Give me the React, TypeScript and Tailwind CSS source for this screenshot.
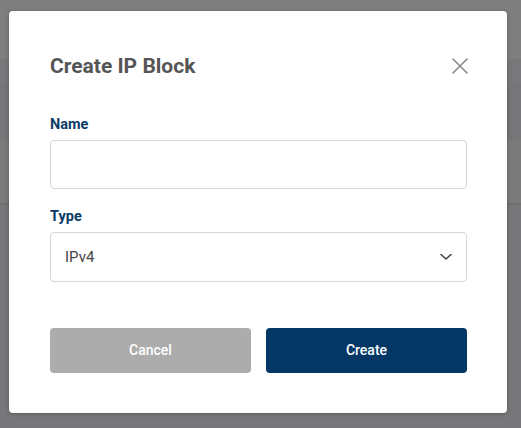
import * as React from "react";

function CloseIcon() {
  return (
    <svg width="16" height="16" viewBox="0 0 16 16" fill="none" aria-hidden>
      <path d="M1 1L15 15M15 1L1 15" stroke="#8a8a8a" strokeWidth="1.6" strokeLinecap="round" />
    </svg>
  );
}

function Chevron() {
  return (
    <svg width="12" height="7" viewBox="0 0 12 7" fill="none" aria-hidden>
      <path d="M1 1L6 5.5L11 1" stroke="#444444" strokeWidth="1.6" strokeLinecap="round" strokeLinejoin="round" />
    </svg>
  );
}

function Field({ label, children, className }: { label: string; children: React.ReactNode; className?: string }) {
  return (
    <div className={className}>
      <div className="text-[14.5px] leading-[20px] font-bold text-[#0b3b67]">{label}</div>
      {children}
    </div>
  );
}

export default function App() {
  const [name, setName] = React.useState("");
  const [type, setType] = React.useState("IPv4");

  return (
    <div className="relative h-[428px] w-[521px] overflow-hidden font-['Roboto',_'Liberation_Sans',_sans-serif]">
      {/* page behind the overlay */}
      <div className="flex h-full flex-col">
        <div className="h-[59px] bg-[#7e7e7e]" />
        <div className="h-[27px] border-b border-[#737375] bg-[#78787a]" />
        <div className="h-[53px] border-b border-[#747476] bg-[#767678]" />
        <div className="h-[66px] border-b-2 border-[#6f6f73] bg-[#7a7a7a]" />
        <div className="flex-1 bg-[#77777a]" />
      </div>

      {/* dialog */}
      <div className="absolute left-[9px] top-[11px] w-[498px] rounded-[4px] bg-white pb-[40px] pl-[41px] pr-[40px] pt-[43px] shadow-[0_1px_4px_rgba(0,0,0,0.25)]">
        <div className="flex items-center justify-between">
          <h2 className="text-[21px] leading-[24px] font-bold text-[#555555]">Create IP Block</h2>
          <button className="mr-[-1px] grid h-[16px] w-[16px] place-items-center" aria-label="Close">
            <CloseIcon />
          </button>
        </div>

        <Field label="Name" className="mt-[37px]">
          <input
            value={name}
            onChange={(e) => setName(e.target.value)}
            className="mt-[5px] block h-[49px] w-full rounded-[4px] border border-[#d3d8de] px-[14px] text-[15px] text-[#444] outline-none"
          />
        </Field>

        <Field label="Type" className="mt-[18px]">
          <div className="relative mt-[5px]">
            <select
              value={type}
              onChange={(e) => setType(e.target.value)}
              className="block h-[50px] w-full appearance-none rounded-[4px] border border-[#d3d8de] bg-white px-[14px] text-[15px] text-[#444] outline-none"
            >
              <option>IPv4</option>
              <option>IPv6</option>
            </select>
            <span className="pointer-events-none absolute right-[15px] top-1/2 -translate-y-1/2">
              <Chevron />
            </span>
          </div>
        </Field>

        <div className="mt-[46px] flex gap-[15px]">
          <button className="h-[45px] flex-1 rounded-[4px] bg-[#acacac] text-[14px] font-medium text-white">
            Cancel
          </button>
          <button className="h-[45px] flex-1 rounded-[4px] bg-[#033766] text-[14px] font-medium text-white">
            Create
          </button>
        </div>
      </div>
    </div>
  );
}
